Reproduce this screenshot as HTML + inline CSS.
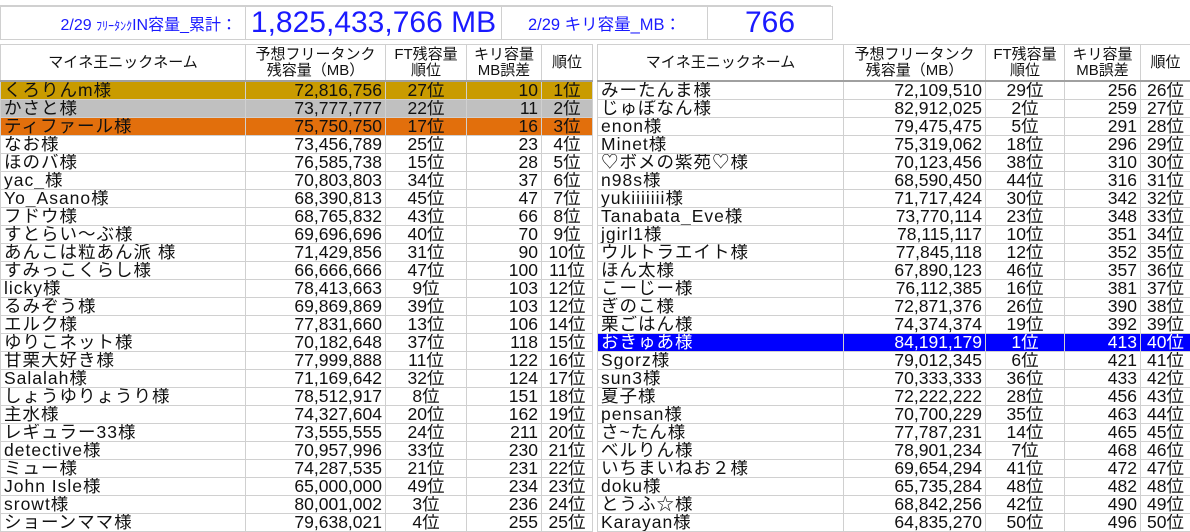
<!DOCTYPE html><html><head><meta charset="utf-8"><style>
body{margin:0;width:1190px;height:531px;overflow:hidden;background:#fff;font-family:"Liberation Sans","Noto Sans CJK JP",sans-serif;color:#111}
table{border-collapse:collapse;table-layout:fixed;position:absolute;top:44px}
td{border:1px solid #d0d0d0;height:17px;padding:0 3px;font-size:17.5px;line-height:17px;white-space:nowrap;overflow:hidden}
td:first-child{letter-spacing:1px}
tr.h td{height:35px;line-height:16px;text-align:center;font-size:15px;border-bottom:2px solid #a0a0a0;letter-spacing:0}
td.r{text-align:right}td.c{text-align:center}
.g td{background:#c99b00}.s td{background:#c0c0c0}.o td{background:#e26f0c}.b td{background:#0000ff;color:#fff}
.top{position:absolute;top:6px;height:32px;border:1px solid #d0d0d0;color:#1a1aff;display:flex;align-items:center}
</style></head><body>
<div style="position:absolute;left:0;top:5px;width:831px;height:1px;background:#d0d0d0"></div>
<div class="top" style="left:0;width:244px;justify-content:flex-end;font-size:16px"><span style="padding-right:8px">2/29 <span style="font-size:12px">ﾌﾘｰﾀﾝｸ</span>IN容量_累計：</span></div>
<div class="top" style="left:245px;width:255px;justify-content:center;font-size:30px">1,825,433,766 MB</div>
<div class="top" style="left:501px;width:205px;justify-content:center;font-size:16.5px">2/29 キリ容量_MB：</div>
<div class="top" style="left:707px;width:124px;justify-content:center;font-size:30px">766</div>
<table style="left:0;width:592px"><colgroup><col style="width:245px"><col style="width:140px"><col style="width:81px"><col style="width:75px"><col style="width:51px"></colgroup>
<tr class="h"><td>マイネ王ニックネーム</td><td>予想フリータンク<br>残容量（MB）</td><td>FT残容量<br>順位</td><td>キリ容量<br>MB誤差</td><td>順位</td></tr>
<tr class="g"><td>くろりんm様</td><td class="r">72,816,756</td><td class="c">27位</td><td class="r">10</td><td class="c">1位</td></tr>
<tr class="s"><td>かさと様</td><td class="r">73,777,777</td><td class="c">22位</td><td class="r">11</td><td class="c">2位</td></tr>
<tr class="o"><td>ティファール様</td><td class="r">75,750,750</td><td class="c">17位</td><td class="r">16</td><td class="c">3位</td></tr>
<tr><td>なお様</td><td class="r">73,456,789</td><td class="c">25位</td><td class="r">23</td><td class="c">4位</td></tr>
<tr><td>ほのバ様</td><td class="r">76,585,738</td><td class="c">15位</td><td class="r">28</td><td class="c">5位</td></tr>
<tr><td>yac_様</td><td class="r">70,803,803</td><td class="c">34位</td><td class="r">37</td><td class="c">6位</td></tr>
<tr><td>Yo_Asano様</td><td class="r">68,390,813</td><td class="c">45位</td><td class="r">47</td><td class="c">7位</td></tr>
<tr><td>フドウ様</td><td class="r">68,765,832</td><td class="c">43位</td><td class="r">66</td><td class="c">8位</td></tr>
<tr><td>すとらい～ぶ様</td><td class="r">69,696,696</td><td class="c">40位</td><td class="r">70</td><td class="c">9位</td></tr>
<tr><td>あんこは粒あん派 様</td><td class="r">71,429,856</td><td class="c">31位</td><td class="r">90</td><td class="c">10位</td></tr>
<tr><td>すみっこくらし様</td><td class="r">66,666,666</td><td class="c">47位</td><td class="r">100</td><td class="c">11位</td></tr>
<tr><td>licky様</td><td class="r">78,413,663</td><td class="c">9位</td><td class="r">103</td><td class="c">12位</td></tr>
<tr><td>るみぞう様</td><td class="r">69,869,869</td><td class="c">39位</td><td class="r">103</td><td class="c">12位</td></tr>
<tr><td>エルク様</td><td class="r">77,831,660</td><td class="c">13位</td><td class="r">106</td><td class="c">14位</td></tr>
<tr><td>ゆりこネット様</td><td class="r">70,182,648</td><td class="c">37位</td><td class="r">118</td><td class="c">15位</td></tr>
<tr><td>甘栗大好き様</td><td class="r">77,999,888</td><td class="c">11位</td><td class="r">122</td><td class="c">16位</td></tr>
<tr><td>Salalah様</td><td class="r">71,169,642</td><td class="c">32位</td><td class="r">124</td><td class="c">17位</td></tr>
<tr><td>しょうゆりょうり様</td><td class="r">78,512,917</td><td class="c">8位</td><td class="r">151</td><td class="c">18位</td></tr>
<tr><td>主水様</td><td class="r">74,327,604</td><td class="c">20位</td><td class="r">162</td><td class="c">19位</td></tr>
<tr><td>レギュラー33様</td><td class="r">73,555,555</td><td class="c">24位</td><td class="r">211</td><td class="c">20位</td></tr>
<tr><td>detective様</td><td class="r">70,957,996</td><td class="c">33位</td><td class="r">230</td><td class="c">21位</td></tr>
<tr><td>ミュー様</td><td class="r">74,287,535</td><td class="c">21位</td><td class="r">231</td><td class="c">22位</td></tr>
<tr><td>John Isle様</td><td class="r">65,000,000</td><td class="c">49位</td><td class="r">234</td><td class="c">23位</td></tr>
<tr><td>srowt様</td><td class="r">80,001,002</td><td class="c">3位</td><td class="r">236</td><td class="c">24位</td></tr>
<tr><td>ショーンママ様</td><td class="r">79,638,021</td><td class="c">4位</td><td class="r">255</td><td class="c">25位</td></tr>
</table>
<table style="left:597px;width:593px"><colgroup><col style="width:246px"><col style="width:142px"><col style="width:79px"><col style="width:76px"><col style="width:50px"></colgroup>
<tr class="h"><td>マイネ王ニックネーム</td><td>予想フリータンク<br>残容量（MB）</td><td>FT残容量<br>順位</td><td>キリ容量<br>MB誤差</td><td>順位</td></tr>
<tr><td>みーたんま様</td><td class="r">72,109,510</td><td class="c">29位</td><td class="r">256</td><td class="c">26位</td></tr>
<tr><td>じゅぽなん様</td><td class="r">82,912,025</td><td class="c">2位</td><td class="r">259</td><td class="c">27位</td></tr>
<tr><td>enon様</td><td class="r">79,475,475</td><td class="c">5位</td><td class="r">291</td><td class="c">28位</td></tr>
<tr><td>Minet様</td><td class="r">75,319,062</td><td class="c">18位</td><td class="r">296</td><td class="c">29位</td></tr>
<tr><td>♡ボメの紫苑♡様</td><td class="r">70,123,456</td><td class="c">38位</td><td class="r">310</td><td class="c">30位</td></tr>
<tr><td>n98s様</td><td class="r">68,590,450</td><td class="c">44位</td><td class="r">316</td><td class="c">31位</td></tr>
<tr><td>yukiiiiiii様</td><td class="r">71,717,424</td><td class="c">30位</td><td class="r">342</td><td class="c">32位</td></tr>
<tr><td>Tanabata_Eve様</td><td class="r">73,770,114</td><td class="c">23位</td><td class="r">348</td><td class="c">33位</td></tr>
<tr><td>jgirl1様</td><td class="r">78,115,117</td><td class="c">10位</td><td class="r">351</td><td class="c">34位</td></tr>
<tr><td>ウルトラエイト様</td><td class="r">77,845,118</td><td class="c">12位</td><td class="r">352</td><td class="c">35位</td></tr>
<tr><td>ほん太様</td><td class="r">67,890,123</td><td class="c">46位</td><td class="r">357</td><td class="c">36位</td></tr>
<tr><td>こーじー様</td><td class="r">76,112,385</td><td class="c">16位</td><td class="r">381</td><td class="c">37位</td></tr>
<tr><td>ぎのこ様</td><td class="r">72,871,376</td><td class="c">26位</td><td class="r">390</td><td class="c">38位</td></tr>
<tr><td>栗ごはん様</td><td class="r">74,374,374</td><td class="c">19位</td><td class="r">392</td><td class="c">39位</td></tr>
<tr class="b"><td>おきゅあ様</td><td class="r">84,191,179</td><td class="c">1位</td><td class="r">413</td><td class="c">40位</td></tr>
<tr><td>Sgorz様</td><td class="r">79,012,345</td><td class="c">6位</td><td class="r">421</td><td class="c">41位</td></tr>
<tr><td>sun3様</td><td class="r">70,333,333</td><td class="c">36位</td><td class="r">433</td><td class="c">42位</td></tr>
<tr><td>夏子様</td><td class="r">72,222,222</td><td class="c">28位</td><td class="r">456</td><td class="c">43位</td></tr>
<tr><td>pensan様</td><td class="r">70,700,229</td><td class="c">35位</td><td class="r">463</td><td class="c">44位</td></tr>
<tr><td>さ~たん様</td><td class="r">77,787,231</td><td class="c">14位</td><td class="r">465</td><td class="c">45位</td></tr>
<tr><td>べルりん様</td><td class="r">78,901,234</td><td class="c">7位</td><td class="r">468</td><td class="c">46位</td></tr>
<tr><td>いちまいねお２様</td><td class="r">69,654,294</td><td class="c">41位</td><td class="r">472</td><td class="c">47位</td></tr>
<tr><td>doku様</td><td class="r">65,735,284</td><td class="c">48位</td><td class="r">482</td><td class="c">48位</td></tr>
<tr><td>とうふ☆様</td><td class="r">68,842,256</td><td class="c">42位</td><td class="r">490</td><td class="c">49位</td></tr>
<tr><td>Karayan様</td><td class="r">64,835,270</td><td class="c">50位</td><td class="r">496</td><td class="c">50位</td></tr>
</table>
</body></html>
